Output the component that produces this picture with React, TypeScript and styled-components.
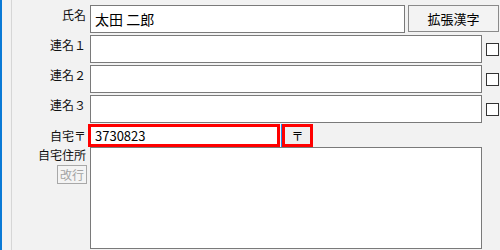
import styled, { createGlobalStyle } from 'styled-components';

const GlobalStyle = createGlobalStyle`
  html, body {
    margin: 0;
    padding: 0;
    background: #f2f2f2;
  }
  body {
    font-family: 'Noto Sans CJK JP', 'Noto Sans', sans-serif;
  }
`;

const App = () => {
  return (
    <>
      <GlobalStyle />
      <Page>
        <Rail />
        <Gutter />
        <Divider />
        <Form>
          <Row>
            <Label>氏名</Label>
            <TextBox width={315} value="太田 二郎" readOnly />
            <WideButton>拡張漢字</WideButton>
          </Row>
          {['連名１', '連名２', '連名３'].map((name) => (
            <Row key={name}>
              <Label>{name}</Label>
              <TextBox width={392} value="" readOnly />
              <CheckBox />
            </Row>
          ))}
          <ZipRow>
            <ZipLabel>自宅〒</ZipLabel>
            <ZipBox value="3730823" readOnly />
            <Caret />
            <ZipButton>〒</ZipButton>
          </ZipRow>
          <AddressRow>
            <AddressSide>
              <AddressLabel>自宅住所</AddressLabel>
              <SmallButton>改行</SmallButton>
            </AddressSide>
            <AddressBox readOnly value="" />
          </AddressRow>
        </Form>
      </Page>
    </>
  );
};

const Page = styled.div`
  width: 500px;
  height: 250px;
  display: flex;
  background: #f2f2f2;
  overflow: hidden;
`;
const Rail = styled.div`
  width: 2px;
  background: #0a7ad6;
`;
const Gutter = styled.div`
  width: 9px;
`;
const Divider = styled.div`
  width: 1px;
  background: #d6d6d6;
`;
const Form = styled.div`
  flex: 1;
  display: flex;
  flex-direction: column;
  padding-top: 5px;
`;
const Row = styled.div`
  display: flex;
  align-items: center;
  height: 28px;
  margin-bottom: 2px;
`;
const Label = styled.div`
  width: 78px;
  box-sizing: border-box;
  padding-right: 4px;
  align-self: flex-start;
  text-align: right;
  font-size: 12px;
  line-height: 20px;
  color: #111;
  white-space: nowrap;
`;
const TextBox = styled.input<{ width: number }>`
  box-sizing: border-box;
  width: ${({ width }) => width}px;
  height: 28px;
  margin: 0;
  padding: 0 4px;
  border: 1px solid #7a7a7a;
  border-radius: 0;
  background: #fff;
  font-family: 'Noto Sans CJK JP', sans-serif;
  font-size: 14px;
  color: #000;
  outline: none;
`;
const WideButton = styled.div`
  box-sizing: border-box;
  width: 91px;
  height: 27px;
  margin-left: 3px;
  align-self: flex-start;
  border: 1px solid #8a8a8a;
  background: #f3f3f3;
  display: flex;
  align-items: center;
  justify-content: center;
  font-size: 13px;
  color: #000;
`;
const CheckBox = styled.div`
  box-sizing: border-box;
  width: 13px;
  height: 13px;
  margin-left: 4px;
  border: 1px solid #333;
  background: #fff;
`;
const ZipRow = styled.div`
  display: flex;
  align-items: center;
  height: 23px;
  margin-top: -1px;
`;
const ZipLabel = styled(Label)`
  align-self: center;
`;
const ZipBox = styled.input`
  box-sizing: border-box;
  width: 192px;
  height: 23px;
  margin: 0 0 0 -2px;
  padding: 0 4px;
  border: 3px solid #ff0000;
  border-radius: 0;
  background: #fff;
  font-family: 'Noto Sans CJK JP', sans-serif;
  font-size: 13px;
  color: #000;
  outline: none;
`;
const Caret = styled.div`
  width: 1px;
  align-self: stretch;
  margin-left: 1px;
  background: #1e88e5;
`;
const ZipButton = styled.div`
  box-sizing: border-box;
  width: 31px;
  height: 23px;
  border: 3px solid #ff0000;
  background: #efefef;
  display: flex;
  align-items: center;
  justify-content: center;
  font-size: 12px;
  color: #000;
`;
const AddressRow = styled.div`
  display: flex;
  align-items: flex-start;
`;
const AddressSide = styled.div`
  width: 78px;
  box-sizing: border-box;
  padding-right: 3px;
  display: flex;
  flex-direction: column;
  align-items: flex-end;
`;
const AddressLabel = styled.div`
  font-size: 12px;
  line-height: 16px;
  padding-right: 1px;
  color: #111;
  white-space: nowrap;
`;
const SmallButton = styled.div`
  box-sizing: border-box;
  margin-top: 2px;
  height: 19px;
  padding: 0 2px;
  border: 1px solid #a8a8a8;
  background: #f4f4f4;
  font-size: 12px;
  line-height: 17px;
  color: #a3a3a3;
`;
const AddressBox = styled.textarea`
  box-sizing: border-box;
  width: 392px;
  height: 102px;
  margin: 0;
  padding: 2px 4px;
  border: 1px solid #7a7a7a;
  border-radius: 0;
  background: #fff;
  resize: none;
  outline: none;
  font-family: 'Noto Sans CJK JP', sans-serif;
  font-size: 13px;
`;

export default App;
